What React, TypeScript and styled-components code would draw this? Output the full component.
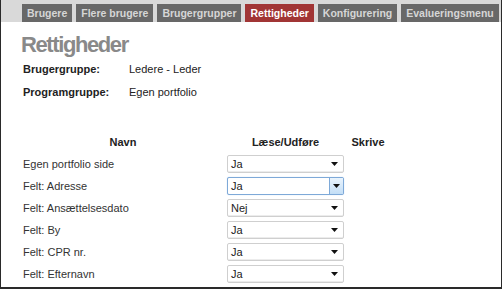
import { FC } from 'react';
import { styled, createGlobalStyle } from 'styled-components';

const GlobalStyle = createGlobalStyle`
  html, body {
    margin: 0;
    padding: 0;
    background: #fff;
  }
  * {
    box-sizing: border-box;
  }
`;

const tabs = ['Brugere', 'Flere brugere', 'Brugergrupper', 'Rettigheder', 'Konfigurering', 'Evalueringsmenu'];

const rows: { name: string; value: string; focused?: boolean }[] = [
  { name: 'Egen portfolio side', value: 'Ja' },
  { name: 'Felt: Adresse', value: 'Ja', focused: true },
  { name: 'Felt: Ansættelsesdato', value: 'Nej' },
  { name: 'Felt: By', value: 'Ja' },
  { name: 'Felt: CPR nr.', value: 'Ja' },
  { name: 'Felt: Efternavn', value: 'Ja' },
];

const SelectBox: FC<{ value: string; focused?: boolean }> = ({ value, focused }) => (
  <SSelect $focused={focused}>
    <SSelectText>{value}</SSelectText>
    <SArrowButton $focused={focused}>
      <svg width="7" height="4" viewBox="0 0 7 4">
        <path d="M0 0 H7 L3.5 4 Z" fill="#111" />
      </svg>
    </SArrowButton>
  </SSelect>
);

const App: FC = () => {
  return (
    <>
      <GlobalStyle />
      <SFrame>
        <STabBar>
          {tabs.map((t) => (
            <STab key={t} $active={t === 'Rettigheder'}>
              {t}
            </STab>
          ))}
        </STabBar>
        <SContent>
          <STitle>Rettigheder</STitle>
          <SInfoRow>
            <SInfoLabel>Brugergruppe:</SInfoLabel>
            <SInfoValue>Ledere - Leder</SInfoValue>
          </SInfoRow>
          <SInfoRow $gap={9}>
            <SInfoLabel>Programgruppe:</SInfoLabel>
            <SInfoValue>Egen portfolio</SInfoValue>
          </SInfoRow>
          <STable>
            <SHeadCell>Navn</SHeadCell>
            <SHeadCell>Læse/Udføre</SHeadCell>
            <SHeadCell>Skrive</SHeadCell>
            {rows.map((r) => (
              <SRow key={r.name}>
                <SNameCell>{r.name}</SNameCell>
                <SCell>
                  <SelectBox value={r.value} focused={r.focused} />
                </SCell>
                <SCell />
              </SRow>
            ))}
            <SRow>
              <SNameCell />
              <SCell>
                <SSelect />
              </SCell>
              <SCell />
            </SRow>
          </STable>
        </SContent>
      </SFrame>
    </>
  );
};

const SFrame = styled.div`
  width: 502px;
  height: 289px;
  overflow: hidden;
  border-left: 1px solid #2a2a2a;
  border-right: 1px solid #2a2a2a;
  border-bottom: 2px solid #2a2a2a;
  background: #fff;
  font-family: "Liberation Sans", Arial, sans-serif;
`;

const STabBar = styled.div`
  display: flex;
  align-items: flex-end;
  gap: 4px;
  height: 22px;
  padding-left: 21px;
  background: #d9d9d9;
`;

const STab = styled.div<{ $active?: boolean }>`
  height: 18px;
  line-height: 18px;
  padding: 0 5px;
  font-size: 10.5px;
  font-weight: bold;
  white-space: nowrap;
  color: ${(p) => (p.$active ? '#fff' : '#d6d6d6')};
  background: ${(p) => (p.$active ? '#a13535' : '#686868')};
`;

const SContent = styled.div`
  padding: 0 0 0 22px;
`;

const STitle = styled.h1`
  margin: 10px 0 0 -2px;
  font-size: 22px;
  line-height: 26px;
  font-weight: bold;
  letter-spacing: -1.4px;
  color: #898989;
`;

const SInfoRow = styled.div<{ $gap?: number }>`
  display: grid;
  grid-template-columns: 106px auto;
  margin-top: ${(p) => p.$gap ?? 4}px;
  font-size: 11px;
  line-height: 14px;
  color: #222;
`;

const SInfoLabel = styled.div`
  font-weight: bold;
`;

const SInfoValue = styled.div``;

const STable = styled.div`
  display: grid;
  grid-template-columns: 200px 117px 40px;
  grid-auto-rows: 22px;
  column-gap: 4px;
  margin-top: 32px;
  font-size: 11px;
  color: #333;
`;

const SRow = styled.div`
  display: contents;
`;

const SHeadCell = styled.div`
  display: flex;
  align-items: center;
  justify-content: center;
  font-weight: bold;
  color: #222;
`;

const SNameCell = styled.div`
  display: flex;
  align-items: center;
`;

const SCell = styled.div`
  display: flex;
  align-items: center;
`;

const SSelect = styled.div<{ $focused?: boolean }>`
  display: flex;
  align-items: stretch;
  width: 117px;
  height: 18px;
  border: 1px solid ${(p) => (p.$focused ? '#7ea9d8' : '#cfcfcf')};
  border-radius: 2px;
  background: #fff;
  box-shadow: ${(p) => (p.$focused ? '0 0 1px #a9c9ec' : 'inset 0 -1px 0 #ececec')};
`;

const SSelectText = styled.div`
  flex: 1;
  display: flex;
  align-items: center;
  padding-left: 3px;
  color: #222;
`;

const SArrowButton = styled.div<{ $focused?: boolean }>`
  width: 14px;
  display: flex;
  align-items: center;
  justify-content: center;
  margin-right: ${(p) => (p.$focused ? '0' : '2px')};
  border-left: ${(p) => (p.$focused ? '1px solid #7ea9d8' : 'none')};
  background: ${(p) => (p.$focused ? 'linear-gradient(#eaf4fd, #c3def6)' : 'transparent')};
`;

export default App;
